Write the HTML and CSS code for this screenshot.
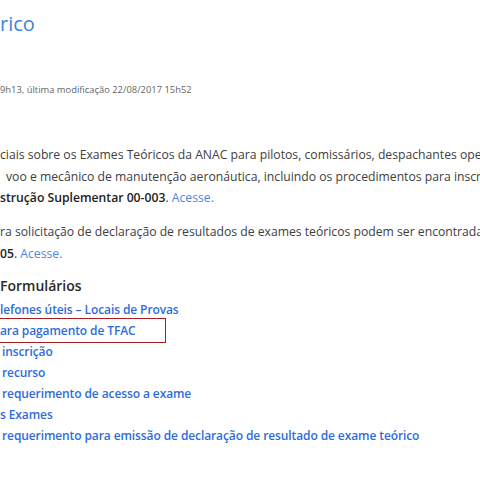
FILE: index.html
```html
<!DOCTYPE html>
<html lang="pt-BR">
<head>
<meta charset="utf-8">
<title>Exame Teórico</title>
<link rel="stylesheet" href="styles.css">
</head>
<body>
<main class="page">
  <h1 class="title">rico</h1>
  <div class="meta">9h13, última modificação 22/08/2017 15h52</div>
  <div class="text p1">
    <div class="line">ciais sobre os Exames Teóricos da ANAC para pilotos, comissários, despachantes operacionais de</div>
    <div class="line indent">voo e mecânico de manutenção aeronáutica, incluindo os procedimentos para inscrição</div>
    <div class="line"><strong>strução Suplementar 00-003</strong>. <a class="acesse" href="#">Acesse.</a></div>
  </div>
  <div class="text p2">
    <div class="line">ra solicitação de declaração de resultados de exames teóricos podem ser encontradas na</div>
    <div class="line"><strong>05</strong>. <a class="acesse" href="#">Acesse.</a></div>
  </div>
  <h2 class="heading">Formulários</h2>
  <ul class="links">
    <li><a href="#">lefones úteis – Locais de Provas</a></li>
    <li class="marked"><a href="#">ara pagamento de TFAC</a></li>
    <li class="indent"><a href="#">inscrição</a></li>
    <li class="indent"><a href="#">recurso</a></li>
    <li class="indent"><a href="#">requerimento de acesso a exame</a></li>
    <li><a href="#">s Exames</a></li>
    <li class="indent"><a href="#">requerimento para emissão de declaração de resultado de exame teórico</a></li>
  </ul>
</main>
</body>
</html>
```
FILE: styles.css
```css
html, body {
  margin: 0;
  padding: 0;
  background: #ffffff;
  overflow: hidden;
}
body {
  font-family: "Open Sans", "DejaVu Sans", sans-serif;
  width: 480px;
  height: 480px;
}
.page {
  padding-top: 9px;
  white-space: nowrap;
}
.title {
  margin: 0;
  font-size: 20px;
  line-height: 30px;
  font-weight: 400;
  color: #3b84e0;
}
.meta {
  margin-top: 43px;
  font-size: 9.4px;
  line-height: 16px;
  color: #666666;
}
.text {
  font-size: 12.2px;
  line-height: 21.5px;
  color: #404040;
}
.p1 {
  margin-top: 46px;
}
.p2 {
  margin-top: 12.5px;
}
.line.indent {
  padding-left: 6px;
}
.text strong {
  font-weight: 600;
  color: #222222;
}
.acesse {
  color: #4f86df;
  text-decoration: none;
}
.heading {
  margin: 10.5px 0 0;
  font-size: 14px;
  line-height: 22px;
  font-weight: 600;
  color: #2a2a2a;
}
.links {
  list-style: none;
  margin: 2.5px 0 0;
  padding: 0;
  font-size: 12px;
  line-height: 21px;
}
.links a {
  color: #2e6cdb;
  text-decoration: none;
  font-weight: 600;
  letter-spacing: -0.1px;
}
.links li.indent {
  padding-left: 2px;
}
.links li.marked {
  position: relative;
}
.links li.marked::after {
  content: "";
  position: absolute;
  left: -10px;
  top: -2px;
  width: 174px;
  height: 23px;
  border: 1px solid #a51d24;
}
```
